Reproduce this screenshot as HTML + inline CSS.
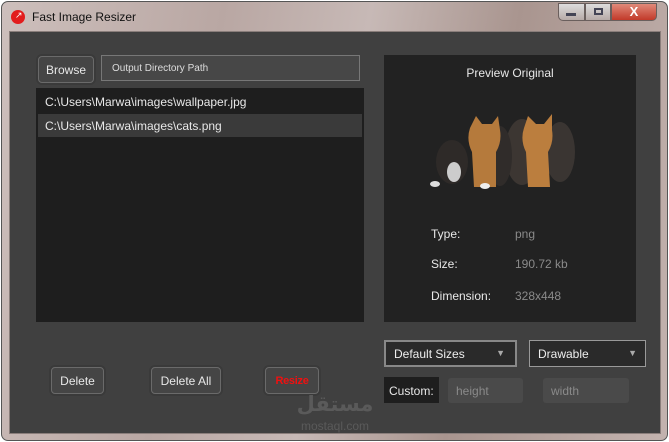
<!DOCTYPE html>
<html><head><style>
*{margin:0;padding:0;box-sizing:border-box}
body{width:669px;height:442px;overflow:hidden;background:#fff;font-family:"Liberation Sans","DejaVu Sans",sans-serif;position:relative}
.a{position:absolute}
.frame{left:1px;top:1px;width:667px;height:440px;border-radius:7px;border:1px solid #555;background:linear-gradient(100deg,#cdbfbc 0%,#b9a7a3 30%,#c7b9b6 50%,#a9958f 70%,#c3b3af 100%)}
.client{left:9px;top:31px;width:652px;height:403px;background:#404040;border:1px solid #8a7e7b}
.btn{background:#454545;border:1.5px solid #6a6a6a;border-radius:4px;color:#e8e8e8;font-size:12px;display:flex;align-items:center;justify-content:center;box-shadow:0 0 0 2px #3a3a3a;white-space:nowrap}
.t{color:#e8e8e8;font-size:12px;white-space:nowrap}
.g{color:#8a8a8a;font-size:12px}
</style></head><body>
<div class="a frame"></div>
<div class="a" style="left:11px;top:10px;width:14px;height:14px;border-radius:50%;background:#e21c1c"></div>
<div class="a" style="left:15px;top:10px;color:#fff;font-size:9px">↗</div>
<div class="a t" style="left:32px;top:10px;color:#111;font-size:12px">Fast Image Resizer</div>
<div class="a" style="left:558px;top:3px;width:27px;height:18px;border:1px solid #6a5f5d;border-radius:0 0 0 5px;background:linear-gradient(#ddd,#b7aaa7)"></div>
<div class="a" style="left:566px;top:13px;width:10px;height:3px;background:#445;"></div>
<div class="a" style="left:585px;top:3px;width:26px;height:18px;border:1px solid #6a5f5d;background:linear-gradient(#ddd,#b7aaa7)"></div>
<div class="a" style="left:594px;top:8px;width:9px;height:7px;border:2px solid #445"></div>
<div class="a" style="left:611px;top:3px;width:46px;height:18px;border:1px solid #6a5f5d;border-radius:0 0 5px 0;background:linear-gradient(#e08a7a,#c23a2a);color:#fff;font-weight:bold;font-size:13px;text-align:center;line-height:16px">X</div>
<div class="a client"></div>

<div class="a btn" style="left:38px;top:56px;width:56px;height:27px">Browse</div>
<div class="a" style="left:101px;top:55px;width:259px;height:26px;background:#474747;border:1px solid #777;color:#ddd;font-size:10px;padding:7px 10px">Output Directory Path</div>
<div class="a" style="left:36px;top:88px;width:328px;height:234px;background:#1e1e1e"></div>
<div class="a t" style="left:45px;top:95px">C:\Users\Marwa\images\wallpaper.jpg</div>
<div class="a" style="left:38px;top:114px;width:324px;height:23px;background:#3a3a3a"></div>
<div class="a t" style="left:45px;top:119px">C:\Users\Marwa\images\cats.png</div>

<div class="a" style="left:384px;top:55px;width:252px;height:267px;background:#222"></div>
<div class="a t" style="left:384px;top:66px;width:252px;text-align:center">Preview Original</div>
<svg class="a" style="left:430px;top:112px" width="150" height="78">
<ellipse cx="130" cy="40" rx="15" ry="30" fill="#3a3532"/>
<ellipse cx="22" cy="50" rx="16" ry="22" fill="#2e2a28"/><ellipse cx="24" cy="60" rx="7" ry="10" fill="#ccc"/><ellipse cx="5" cy="72" rx="5" ry="3" fill="#ddd"/>
<ellipse cx="92" cy="40" rx="17" ry="33" fill="#3c3632"/>
<ellipse cx="70" cy="44" rx="12" ry="30" fill="#302c2a"/>
<path d="M40 16 L46 4 L52 12 L62 12 L68 4 L70 18 Q72 30 66 40 L66 75 L44 75 L42 40 Q36 28 40 16Z" fill="#b57a3c"/>
<path d="M94 16 L98 4 L106 12 L114 12 L122 2 L122 18 Q124 30 118 40 L120 75 L98 75 L96 40 Q90 28 94 16Z" fill="#bb7e3e"/>
<ellipse cx="55" cy="74" rx="5" ry="3" fill="#eee"/>
</svg>
<div class="a t" style="left:431px;top:227px">Type:</div><div class="a g" style="left:515px;top:227px">png</div>
<div class="a t" style="left:431px;top:257px">Size:</div><div class="a g" style="left:515px;top:257px">190.72 kb</div>
<div class="a t" style="left:431px;top:289px">Dimension:</div><div class="a g" style="left:515px;top:289px">328x448</div>

<div class="a" style="left:384px;top:340px;width:133px;height:27px;background:#2a2a2a;border:2px solid #888;color:#eee;font-size:12px;padding:5px 8px">Default Sizes<span style="position:absolute;right:10px;top:6px;color:#aaa;font-size:9px">▼</span></div>
<div class="a" style="left:529px;top:340px;width:117px;height:27px;background:#2a2a2a;border:1px solid #999;color:#eee;font-size:12px;padding:6px 8px">Drawable<span style="position:absolute;right:8px;top:7px;color:#aaa;font-size:9px">▼</span></div>
<div class="a t" style="left:384px;top:377px;width:55px;height:26px;background:#1e1e1e;padding:7px 5px">Custom:</div>
<div class="a g" style="left:448px;top:378px;width:75px;height:25px;background:#4a4a4a;border-radius:3px;padding:6px 8px">height</div>
<div class="a g" style="left:543px;top:378px;width:86px;height:25px;background:#4a4a4a;border-radius:3px;padding:6px 8px">width</div>

<div class="a btn" style="left:51px;top:367px;width:53px;height:27px">Delete</div>
<div class="a btn" style="left:151px;top:367px;width:70px;height:27px">Delete All</div>
<div class="a btn" style="left:265px;top:367px;width:54px;height:27px;color:#f01010;font-weight:bold;font-size:11px;letter-spacing:-0.3px">Resize</div>

<div class="a" style="left:290px;top:390px;width:90px;text-align:center;color:#5a5a5a;font-size:21px;font-weight:bold;font-family:'DejaVu Sans',sans-serif;line-height:28px">مستقل</div>
<div class="a" style="left:290px;top:419px;width:90px;text-align:center;color:#5a5a5a;font-size:12px">mostaql.com</div>
</body></html>
